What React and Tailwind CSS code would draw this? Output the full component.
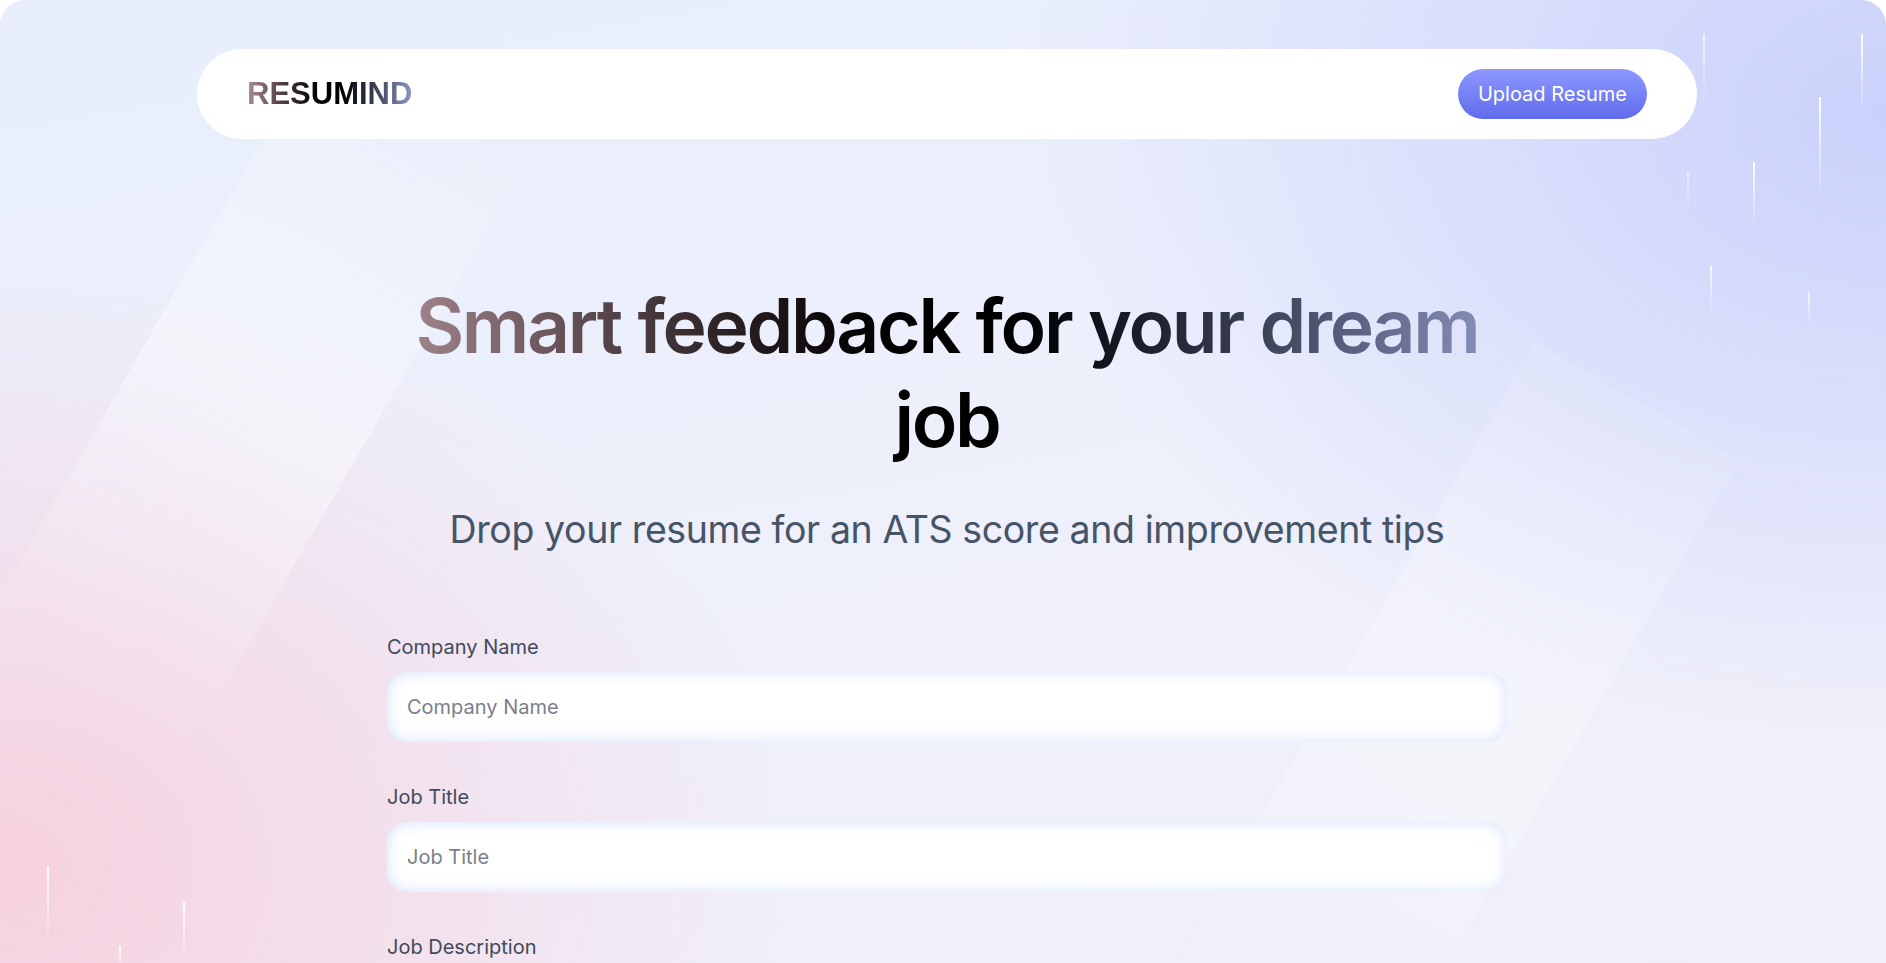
const streaks = [
    { key: 1, cls: "left-[1703px] top-[34px] h-[72px] opacity-70" },
    { key: 2, cls: "left-[1861px] top-[34px] h-[80px]" },
    { key: 3, cls: "left-[1819px] top-[97px] h-[105px]" },
    { key: 4, cls: "left-[1753px] top-[162px] h-[68px]" },
    { key: 5, cls: "left-[1687px] top-[172px] h-[42px] opacity-50" },
    { key: 6, cls: "left-[1710px] top-[266px] h-[48px] opacity-80" },
    { key: 7, cls: "left-[1808px] top-[292px] h-[36px] opacity-70" },
    { key: 8, cls: "left-[47px] top-[866px] h-[76px]" },
    { key: 9, cls: "left-[183px] top-[902px] h-[62px]" },
    { key: 10, cls: "left-[119px] top-[946px] h-[20px]" },
];

const Field = ({ id, label }) => (
    <div className="flex w-full flex-col items-start gap-[10px]">
        <label htmlFor={id} className="text-[20px] leading-[30px] text-[#414a5b]">
            {label}
        </label>
        <input
            id={id}
            type="text"
            placeholder={label}
            className="w-full rounded-[20px] bg-white p-5 text-[20px] leading-[30px] text-[#1f2937] shadow-[inset_0_0_15px_0_rgba(36,99,235,0.2)] outline-none placeholder:text-[#7a7f89]"
        />
    </div>
);

export default function App() {
    return (
        <div className="min-h-screen bg-white font-['Inter',sans-serif] [font-feature-settings:&quot;cv11&quot;]">
            <main className="relative h-[963px] overflow-hidden rounded-t-[25px] bg-[#eef0fb] pl-2">
                {/* background wash */}
                <div className="pointer-events-none absolute inset-0 bg-[linear-gradient(170deg,#e8eefc_0%,#edf0fb_45%,#f1eff9_100%)]" />
                <div className="pointer-events-none absolute inset-0 bg-[radial-gradient(1050px_800px_at_0%_90%,rgba(247,207,221,0.95)_0%,rgba(247,207,221,0)_75%)]" />
                <div className="pointer-events-none absolute inset-0 bg-[radial-gradient(1150px_820px_at_100%_12%,rgba(202,209,251,1)_0%,rgba(202,209,251,0.55)_35%,rgba(202,209,251,0)_75%)]" />

                {/* light bands */}
                <div className="pointer-events-none absolute left-[332px] top-[20px] h-[720px] w-[240px] origin-top-left rotate-[30deg] bg-gradient-to-b from-white/0 via-white/40 to-white/0" />
                <div className="pointer-events-none absolute left-[1535px] top-[342px] h-[760px] w-[236px] origin-top-left rotate-[30deg] bg-gradient-to-b from-white/10 via-white/30 to-white/0" />

                {/* falling streaks */}
                {streaks.map((s) => (
                    <div
                        key={s.key}
                        className={`pointer-events-none absolute w-[2px] bg-gradient-to-b from-white to-white/0 ${s.cls}`}
                    />
                ))}

                <div className="relative pt-[49px]">
                    <nav className="mx-auto flex w-[1500px] items-center justify-between rounded-full bg-white px-[50px] py-5">
                        <p className="bg-gradient-to-r from-[#AB8C95] via-black to-[#8E97C5] bg-clip-text font-['Liberation_Sans',sans-serif] text-[31px] font-bold leading-[36px] text-transparent">
                            RESUMIND
                        </p>
                        <button className="rounded-full bg-gradient-to-b from-[#8e98ff] to-[#606beb] px-5 py-[10px] text-[20px] leading-[30px] text-white">
                            Upload Resume
                        </button>
                    </nav>

                    <section className="flex flex-col items-center pt-[140px]">
                        <div className="flex w-[1120px] flex-col items-center gap-10 text-center">
                            <h1 className="w-[1120px] whitespace-nowrap bg-gradient-to-r from-[#AB8C95] via-black to-[#8E97C5] bg-clip-text text-[75px] font-semibold leading-[93.75px] tracking-[-2.3px] text-transparent">
                                Smart feedback for your dream
                                <br />
                                job
                            </h1>
                            <h2 className="text-[37.5px] leading-[45px] tracking-[-0.4px] text-[#475467]">
                                Drop your resume for an ATS score and improvement tips
                            </h2>
                            <form className="mt-10 flex w-full flex-col gap-10 text-left">
                                <Field id="company-name" label="Company Name" />
                                <Field id="job-title" label="Job Title" />
                                <div className="flex w-full flex-col items-start gap-[10px]">
                                    <label htmlFor="job-description" className="text-[20px] leading-[30px] text-[#414a5b]">
                                        Job Description
                                    </label>
                                    <textarea
                                        id="job-description"
                                        rows={5}
                                        placeholder="Job Description"
                                        className="w-full rounded-[20px] bg-white p-5 text-[20px] leading-[30px] shadow-[inset_0_0_15px_0_rgba(36,99,235,0.2)] outline-none placeholder:text-[#7a7f89]"
                                    />
                                </div>
                            </form>
                        </div>
                    </section>
                </div>
            </main>
        </div>
    );
}
